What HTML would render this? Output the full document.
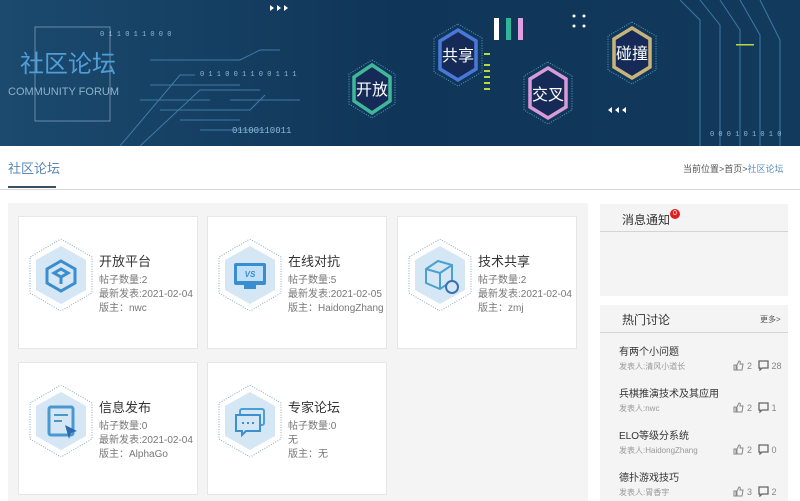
<!DOCTYPE html>
<html><head><meta charset="utf-8"><style>
*{margin:0;padding:0;box-sizing:border-box}
body{width:800px;height:501px;overflow:hidden;background:#fff;font-family:"Liberation Sans","Noto Sans CJK SC",sans-serif;position:relative}
.abs{position:absolute}
.card{position:absolute;background:#fff;border:1px solid #e6e6e6;width:180px;height:133px}
.card svg{position:absolute;left:10px;top:22px}
.ct{position:absolute;left:80px;font-size:13px;color:#333;white-space:nowrap}
.cl{position:absolute;left:80px;font-size:10px;color:#777;line-height:14px;white-space:nowrap}
.hot{position:absolute;left:619px;font-size:10px;color:#333;white-space:nowrap}
.au{position:absolute;left:619px;font-size:8px;color:#999;white-space:nowrap}
.st{position:absolute;left:733px;font-size:9px;color:#888;white-space:nowrap;display:flex;align-items:center;gap:3px}
</style></head><body>
<svg class="abs" style="left:0;top:0" width="800" height="146" viewBox="0 0 800 146">
<defs><linearGradient id="bg" x1="0" y1="0" x2="1" y2="0"><stop offset="0" stop-color="#1b4a6e"/><stop offset=".5" stop-color="#0f3558"/><stop offset="1" stop-color="#123a5c"/></linearGradient></defs>
<rect width="800" height="146" fill="url(#bg)"/>
<rect x="35" y="27" width="75" height="94" fill="none" stroke="#6a8aa8" stroke-width="1"/>
<g stroke="#4a8ab8" stroke-width="1" fill="none" opacity=".8">
<path d="M120 146 L180 75 L195 75"/><path d="M140 146 L200 90 L260 90"/><path d="M150 85 L240 85"/><path d="M140 100 L210 100"/><path d="M160 110 L250 110 L265 95"/><path d="M180 120 L240 120"/><path d="M200 130 L265 130"/><path d="M230 100 L300 100"/><path d="M150 60 L240 60 L260 50 L280 50"/>
<path d="M680 0 L700 20 L700 146"/><path d="M700 0 L720 25 L720 146"/><path d="M720 0 L740 30 L740 146"/><path d="M740 0 L760 35 L760 146"/><path d="M760 0 L780 40 L780 146"/>
</g>
<g fill="#8fb8d8" font-size="7" font-family="Liberation Mono"><text x="200" y="76">0 1 1 0 0 1 1 0 0 1 1 1</text><text x="232" y="133" font-size="9">01100110011</text><text x="710" y="136">0 0 0 1 0 1 0 1 0</text><text x="100" y="36">0 1 1 0 1 1 0 0 0</text></g>
<g fill="#ffffff"><path d="M270 5l4 3-4 3z M277 5l4 3-4 3z M284 5l4 3-4 3z"/><circle cx="574" cy="16" r="1.5"/><circle cx="584" cy="16" r="1.5"/><circle cx="574" cy="26" r="1.5"/><circle cx="584" cy="26" r="1.5"/><path d="M612 107l-4 3 4 3z M619 107l-4 3 4 3z M626 107l-4 3 4 3z"/></g>
<rect x="494" y="18" width="5" height="22" fill="#fff"/><rect x="506" y="18" width="5" height="22" fill="#2fb59a"/><rect x="518" y="18" width="5" height="22" fill="#e0a0e0"/>
<g fill="#b8d840"><rect x="484" y="53" width="6" height="2"/><rect x="484" y="64" width="6" height="2"/><rect x="484" y="70" width="6" height="2"/><rect x="484" y="76" width="6" height="2"/><rect x="484" y="82" width="6" height="2"/><rect x="484" y="88" width="6" height="2"/><rect x="736" y="44" width="18" height="1.5"/></g>
<text x="20" y="72" font-size="24" fill="#4f9ed8">社区论坛</text>
<text x="8" y="95" font-size="11" fill="#8fb0c8">COMMUNITY FORUM</text>
<g font-size="16" fill="#fff" text-anchor="middle">
<polygon points="372,60 395,74 395,104 372,118 349,104 349,74" fill="none" stroke="#5a9ac8" stroke-dasharray="1 1.5"/>
<polygon points="372,65 390,77 390,101 372,113 354,101 354,77" fill="#162a58" stroke="#3fb89a" stroke-width="3.5"/><text x="372" y="95">开放</text>
<polygon points="458,24 482,38 482,72 458,86 434,72 434,38" fill="none" stroke="#5a9ac8" stroke-dasharray="1 1.5"/>
<polygon points="458,30 476,41 476,69 458,80 440,69 440,41" fill="#162a58" stroke="#4a78d8" stroke-width="3.5"/><text x="458" y="61">共享</text>
<polygon points="548,62 572,76 572,110 548,124 524,110 524,76" fill="none" stroke="#5a9ac8" stroke-dasharray="1 1.5"/>
<polygon points="548,68 566,79 566,107 548,118 530,107 530,79" fill="#162a58" stroke="#d89ad8" stroke-width="3.5"/><text x="548" y="100">交叉</text>
<polygon points="632,22 656,36 656,70 632,84 608,70 608,36" fill="none" stroke="#5a9ac8" stroke-dasharray="1 1.5"/>
<polygon points="632,28 650,39 650,67 632,78 614,67 614,39" fill="#162a58" stroke="#c8b47a" stroke-width="3.5"/><text x="632" y="59">碰撞</text>
</g>
</svg>
<div class="abs" style="left:8px;top:158px;font-size:13px;color:#5a88b0">社区论坛</div>
<div class="abs" style="left:8px;top:186px;width:48px;height:2px;background:#3a5068"></div>
<div class="abs" style="left:0;top:189px;width:800px;height:1px;background:#d8d8d8"></div>
<div class="abs" style="left:683px;top:162px;font-size:9px;color:#555">当前位置&gt;首页&gt;<span style="color:#5a8ec0">社区论坛</span></div>
<div class="abs" style="left:8px;top:203px;width:580px;height:298px;background:#f4f4f4"></div>

<svg width="0" height="0" style="position:absolute"><defs>
<g id="hx"><polygon points="32,0 63,18 63,54 32,72 1,54 1,18" fill="none" stroke="#8aa8c8" stroke-dasharray="1 1.5"/><polygon points="32,7 57,21 57,51 32,65 7,51 7,21" fill="#d5e6f5"/></g>
<g id="th"><path d="M1 5h2v5H1z M4 5 L6 1 Q8 1 7 4 H10 L9 10 H4 Z" fill="none" stroke="#888" stroke-width="1"/></g>
<g id="cm"><path d="M1 1h9v7H4l-2 2V8H1z" fill="none" stroke="#666" stroke-width="1.3"/></g>
</defs></svg>

<div class="card" style="left:18px;top:216px"><svg width="64" height="72"><use href="#hx"/><g fill="none" stroke="#3a8ed0" stroke-width="3"><polygon points="32,22 46,30 46,44 32,52 18,44 18,30"/><path d="M25 34 L32 30 L39 34 L32 38 Z M32 38 V45"/></g></svg>
<div class="ct" style="top:34px">开放平台</div><div class="cl" style="top:57px">帖子数量:2<br>最新发表:2021-02-04<br>版主：nwc</div></div>
<div class="card" style="left:207px;top:216px"><svg width="64" height="72"><use href="#hx"/><rect x="16" y="24" width="32" height="22" rx="2" fill="#3a8ed0"/><rect x="19" y="27" width="26" height="15" fill="#bfe0f8"/><text x="32" y="38" font-size="8" font-weight="bold" fill="#3a8ed0" text-anchor="middle" font-style="italic">VS</text><rect x="26" y="46" width="12" height="4" fill="#3a8ed0"/></svg>
<div class="ct" style="top:34px">在线对抗</div><div class="cl" style="top:57px">帖子数量:5<br>最新发表:2021-02-05<br>版主：HaidongZhang</div></div>
<div class="card" style="left:397px;top:216px"><svg width="64" height="72"><use href="#hx"/><g fill="none" stroke="#4aa0d0" stroke-width="2"><path d="M18 30 L30 22 L44 26 L44 42 L32 50 L18 44 Z M18 30 L32 34 L44 26 M32 34 V50"/></g><circle cx="44" cy="48" r="6" fill="#d5e6f5" stroke="#3a70b0" stroke-width="2"/></svg>
<div class="ct" style="top:34px">技术共享</div><div class="cl" style="top:57px">帖子数量:2<br>最新发表:2021-02-04<br>版主：zmj</div></div>
<div class="card" style="left:18px;top:362px"><svg width="64" height="72"><use href="#hx"/><rect x="20" y="22" width="24" height="28" rx="2" fill="none" stroke="#4a98d0" stroke-width="3"/><path d="M25 30h14 M25 36h8" stroke="#4a98d0" stroke-width="2"/><path d="M36 40 L48 46 L42 48 L40 54 Z" fill="#2a6ab0"/></svg>
<div class="ct" style="top:34px">信息发布</div><div class="cl" style="top:57px">帖子数量:0<br>最新发表:2021-02-04<br>版主：AlphaGo</div></div>
<div class="card" style="left:207px;top:362px"><svg width="64" height="72"><use href="#hx"/><rect x="22" y="24" width="24" height="16" rx="2" fill="none" stroke="#4aa0d0" stroke-width="2"/><path d="M18 30 h24 v16 h-14 l-4 4 v-4 h-6 z" fill="#d5e6f5" stroke="#3a90d0" stroke-width="2"/><path d="M24 38h2 M29 38h2 M34 38h2" stroke="#3a90d0" stroke-width="2"/></svg>
<div class="ct" style="top:34px">专家论坛</div><div class="cl" style="top:57px">帖子数量:0<br>无<br>版主：无</div></div>

<div class="abs" style="left:600px;top:204px;width:188px;height:92px;background:#f4f4f4"></div>
<div class="abs" style="left:600px;top:231px;width:188px;height:1px;background:#d4d4d4"></div>
<div class="abs" style="left:622px;top:211px;font-size:12px;color:#333">消息通知</div>
<div class="abs" style="left:670px;top:209px;width:10px;height:10px;border-radius:50%;background:#e02020;color:#fff;font-size:7px;text-align:center;line-height:10px">0</div>
<div class="abs" style="left:600px;top:305px;width:188px;height:196px;background:#f4f4f4"></div>
<div class="abs" style="left:600px;top:332px;width:188px;height:1px;background:#d4d4d4"></div>
<div class="abs" style="left:622px;top:311px;font-size:12px;color:#333">热门讨论</div>
<div class="abs" style="left:760px;top:314px;font-size:8px;color:#555">更多&gt;</div>

<div class="hot" style="top:343px">有两个小问题</div><div class="au" style="top:361px">发表人:清风小道长</div><div class="st" style="top:360px"><svg width="11" height="11"><use href="#th"/></svg>2&nbsp;<svg width="11" height="11"><use href="#cm"/></svg>28</div>
<div class="hot" style="top:385px">兵棋推演技术及其应用</div><div class="au" style="top:403px">发表人:nwc</div><div class="st" style="top:402px"><svg width="11" height="11"><use href="#th"/></svg>2&nbsp;<svg width="11" height="11"><use href="#cm"/></svg>1</div>
<div class="hot" style="top:427px">ELO等级分系统</div><div class="au" style="top:445px">发表人:HaidongZhang</div><div class="st" style="top:444px"><svg width="11" height="11"><use href="#th"/></svg>2&nbsp;<svg width="11" height="11"><use href="#cm"/></svg>0</div>
<div class="hot" style="top:469px">德扑游戏技巧</div><div class="au" style="top:487px">发表人:胃香宇</div><div class="st" style="top:486px"><svg width="11" height="11"><use href="#th"/></svg>3&nbsp;<svg width="11" height="11"><use href="#cm"/></svg>2</div>
</body></html>
